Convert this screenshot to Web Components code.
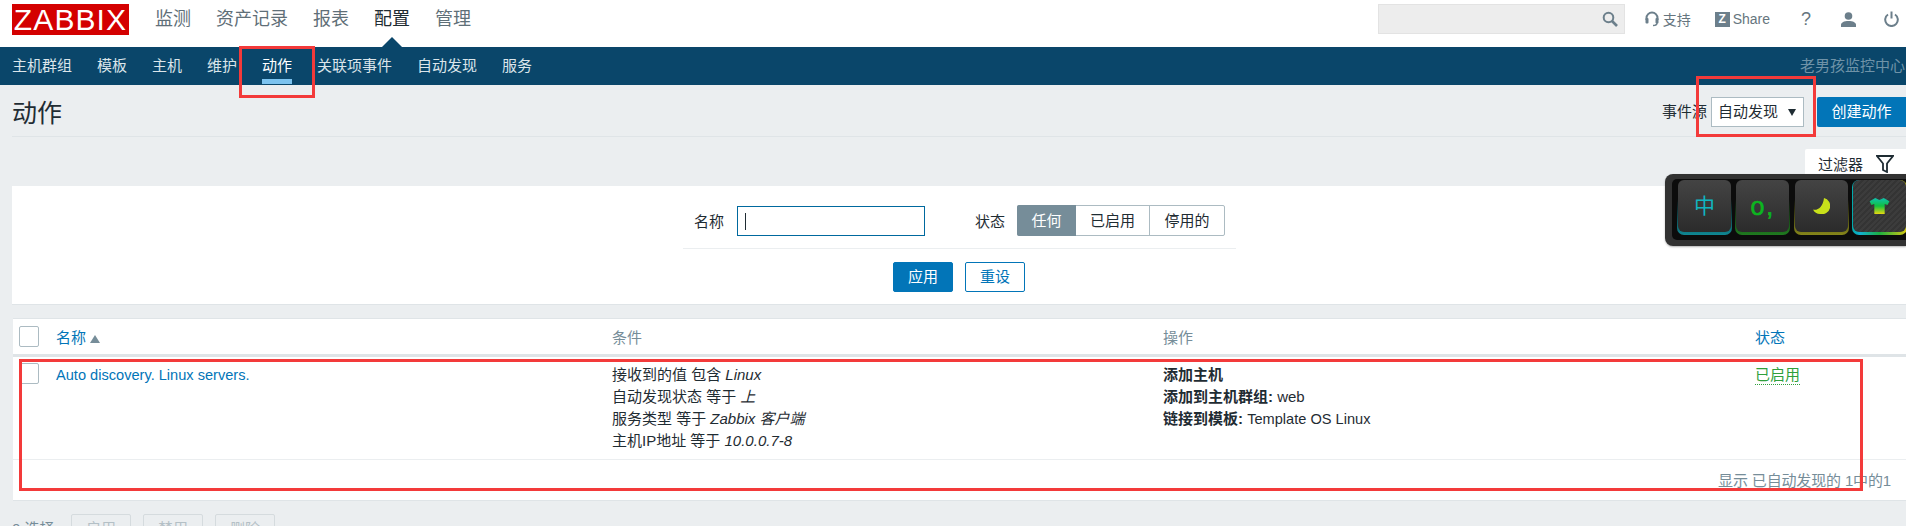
<!DOCTYPE html>
<html lang="zh">
<head>
<meta charset="utf-8">
<title>动作</title>
<style>
    html, body { margin: 0; height: 526px; overflow: hidden; }
    body {
        background: #ebeef0;
        color: #1f2c33;
        font: 15px "Liberation Sans", "Noto Sans CJK SC", sans-serif;
        position: relative;
    }
</style>
</head>
<body>
<z-topbar></z-topbar>
<z-subnav></z-subnav>
<z-page-head></z-page-head>
<z-filter></z-filter>
<z-action-table></z-action-table>
<z-mass-bar></z-mass-bar>
<z-ime-bar></z-ime-bar>
<z-mark style="left:239px;top:46px;width:70px;height:46px"></z-mark>
<z-mark style="left:1696px;top:76px;width:114px;height:55px"></z-mark>
<z-mark style="left:19px;top:359px;width:1838px;height:126px"></z-mark>

<script>
// little helper, every element is just a template string in a shadow root
function shadow(el, html) {
    el.attachShadow({ mode: 'open' });
    el.shadowRoot.innerHTML = html;
}

class ZTopbar extends HTMLElement {
    connectedCallback() {
        shadow(this, `
            <style>
                :host { display: flex; align-items: flex-start; height: 47px; background: #fff; position: relative; }
                .logo {
                    margin: 4px 0 0 12px; width: 117px; height: 31px; background: #d40000; color: #fff;
                    font: 30px/32px "Liberation Sans", sans-serif; letter-spacing: 1.1px; text-align: center;
                }
                nav { display: flex; gap: 25px; margin: 8px 0 0 26px; font-size: 18px; line-height: 22px; color: #5f6f78; }
                nav .on { color: #1f2c33; }
                .arrow {
                    position: absolute; left: 382px; top: 37px; width: 0; height: 0;
                    border: 10px solid transparent; border-top: 0; border-bottom-color: #0a466a;
                }
                .tools { margin-left: auto; display: flex; align-items: center; height: 30px; margin-top: 4px; font-size: 14px; color: #66757e; }
                .search { width: 245px; height: 28px; background: #ededed; border: 1px solid #e3e3e3; display: flex; align-items: center; justify-content: flex-end; margin-right: 20px; }
                .search svg { margin-right: 6px; }
                .tool { display: flex; align-items: center; gap: 3px; }
                .z { width: 15px; height: 15px; background: #6c7f8b; color: #fff; font: bold 12px/15px "Liberation Sans", sans-serif; text-align: center; }
                svg { display: block; }
            </style>
            <div class="logo">ZABBIX</div>
            <nav><span>监测</span><span>资产记录</span><span>报表</span><span class="on">配置</span><span>管理</span></nav>
            <div class="arrow"></div>
            <div class="tools">
                <div class="search">
                    <svg width="16" height="16" viewBox="0 0 16 16" fill="none" stroke="#6c7f8b" stroke-width="2"><circle cx="6.5" cy="6.5" r="4.8"/><path d="M10 10l5 5" stroke-width="2.6"/></svg>
                </div>
                <div class="tool" style="margin-right:24px;gap:4px">
                    <svg width="14" height="16" viewBox="0 0 14 16" fill="none" stroke="#6c7f8b" stroke-width="2"><path d="M1.5 9V7a5.5 5.5 0 0 1 11 0v2"/><rect x="0.5" y="7" width="3" height="5.5" rx="1" fill="#6c7f8b" stroke="none"/><rect x="10.5" y="7" width="3" height="5.5" rx="1" fill="#6c7f8b" stroke="none"/><path d="M12 12c0 2-2 2.5-4 2.5" stroke-width="1.4"/></svg>
                    <span>支持</span>
                </div>
                <div class="tool" style="margin-right:31px"><span class="z">Z</span><span>Share</span></div>
                <div class="tool" style="margin-right:31px;font-size:18px;width:9px">?</div>
                <div class="tool" style="margin-right:28px">
                    <svg width="15" height="15" viewBox="0 0 15 15" fill="#6c7f8b"><circle cx="7.5" cy="4" r="3.8"/><path d="M0 15v-2c0-2.5 3-4 7.5-4s7.5 1.5 7.5 4v2z"/></svg>
                </div>
                <div class="tool" style="margin-right:7px">
                    <svg width="15" height="16" viewBox="0 0 15 16" fill="none" stroke="#6c7f8b" stroke-width="2"><path d="M4 3.5a6.3 6.3 0 1 0 7 0"/><path d="M7.5 0.5v7"/></svg>
                </div>
            </div>
        `);
    }
}

class ZSubnav extends HTMLElement {
    connectedCallback() {
        shadow(this, `
            <style>
                :host { display: flex; height: 38px; background: #0a466a; color: #dbe5ea; font-size: 15px; padding-left: 12px; }
                a { display: block; height: 38px; line-height: 37px; margin-right: 25px; position: relative; white-space: nowrap; }
                a.on { color: #fff; }
                a.on::after { content: ""; position: absolute; left: 0; right: 0; top: 32px; height: 5px; background: #7cc3ef; }
                .brand { margin-left: auto; line-height: 37px; color: #6f93a8; padding-right: 1px; }
            </style>
            <a>主机群组</a><a>模板</a><a>主机</a><a>维护</a><a class="on">动作</a><a>关联项事件</a><a>自动发现</a><a>服务</a>
            <span class="brand">老男孩监控中心</span>
        `);
    }
}

class ZPageHead extends HTMLElement {
    connectedCallback() {
        shadow(this, `
            <style>
                :host { display: flex; align-items: flex-start; height: 51px; margin-left: 12px; border-bottom: 1px solid #dfe4e7; }
                h1 { margin: 13px 0 0; font-size: 25px; line-height: 30px; font-weight: 400; flex: 1; }
                label { margin: 12px 4px 0 0; line-height: 30px; }
                .sel {
                    box-sizing: border-box; width: 93px; height: 30px; margin: 12px 13px 0 0; padding-left: 6px;
                    background: #fff; border: 1px solid #acbbc2; display: flex; align-items: center; line-height: 28px;
                }
                .sel i { margin-left: 10px; width: 0; height: 0; border: 4px solid transparent; border-bottom: 0; border-top: 7px solid #1f2c33; }
                .btn { width: 89px; height: 30px; margin-top: 12px; background: #0275b8; color: #fff; line-height: 30px; text-align: center; border-radius: 2px 0 0 2px; }
            </style>
            <h1>动作</h1>
            <label>事件源</label>
            <div class="sel">自动发现<i></i></div>
            <div class="btn">创建动作</div>
        `);
    }
}

class ZFilter extends HTMLElement {
    connectedCallback() {
        shadow(this, `
            <style>
                :host { display: block; margin-left: 12px; padding-top: 12px; }
                .tab {
                    box-sizing: border-box; margin-left: auto; width: 101px; height: 37px; background: #fff; padding: 0 0 8px 13px;
                    display: flex; align-items: center; gap: 13px; border-radius: 2px 0 0 0;
                }
                .box { background: #fff; height: 118px; border-bottom: 1px solid #dfe4e7; display: flex; flex-direction: column; align-items: center; }
                .form { display: flex; align-items: center; margin-top: 19px; height: 31px; padding-left: 1px; }
                .input { box-sizing: border-box; width: 188px; height: 30px; margin: 0 50px 0 13px; border: 1px solid #00699e; padding: 6px 7px; background: #fff; }
                .input i { display: block; width: 1px; height: 17px; background: #1f2c33; }
                .seg { display: flex; margin-left: 12px; height: 31px; line-height: 29px; box-sizing: border-box; border: 1px solid #acbbc2; border-radius: 2px; text-align: center; }
                .seg span { box-sizing: border-box; }
                .seg .any { width: 59px; margin: -1px 0 -1px -1px; line-height: 31px; background: #768d99; color: #fff; border-radius: 2px 0 0 2px; }
                .seg .en { width: 74px; border-right: 1px solid #acbbc2; }
                .seg .dis { width: 74px; }
                hr { width: 553px; height: 1px; margin: 12px 0 13px; border: 0; background: #ebeef0; }
                .btns { display: flex; gap: 12px; }
                .btns div { box-sizing: border-box; width: 60px; height: 30px; line-height: 28px; border: 1px solid #0275b8; border-radius: 2px; text-align: center; color: #0275b8; }
                .btns .main { background: #0275b8; color: #fff; }
            </style>
            <div class="tab">过滤器
                <svg width="18" height="18" viewBox="0 0 18 18" fill="none" stroke="#1f2c33" stroke-width="1.8"><path d="M1 1h16l-6 7.5v8.5l-4-2v-6.5z"/></svg>
            </div>
            <div class="box">
                <div class="form">
                    <span>名称</span>
                    <div class="input"><i></i></div>
                    <span>状态</span>
                    <div class="seg"><span class="any">任何</span><span class="en">已启用</span><span class="dis">停用的</span></div>
                </div>
                <hr>
                <div class="btns"><div class="main">应用</div><div>重设</div></div>
            </div>
        `);
    }
}

class ZCheck extends HTMLElement {
    connectedCallback() {
        shadow(this, `<style>
            :host { display: block; box-sizing: border-box; width: 20px; height: 21px; background: #fff; border: 1px solid #acbbc2; border-radius: 2px; }
        </style>`);
    }
}

class ZActionTable extends HTMLElement {
    connectedCallback() {
        shadow(this, `
            <style>
                :host { display: block; margin: 13px 0 0 13px; background: #fff; height: 181px; border-top: 1px solid #dfe4e7; border-bottom: 1px solid #dfe4e7; }
                .row { display: grid; grid-template-columns: 43px 556px 551px 592px 1fr; }
                .head { height: 35px; border-bottom: 3px solid #dfe4e7; align-items: center; color: #768d99; }
                .body { height: 95px; padding-top: 7px; line-height: 22px; border-bottom: 1px solid #ebeef0; }
                z-check { margin-left: 6px; }
                .body z-check { margin-top: -1px; }
                .link { color: #0275b8; }
                .lat { font-size: 14.6px; }
                .arrow { display: inline-block; margin-left: 4px; width: 0; height: 0; border: 5px solid transparent; border-top: 0; border-bottom: 8px solid #768d99; }
                em { font-style: italic; }
                b { font-weight: 700; }
                .green { color: #2f9f3c; border-bottom: 1px dotted #2f9f3c; line-height: 19px; display: inline-block; }
                .foot { text-align: right; color: #768d99; padding: 11px 15px 0 0; line-height: 20px; letter-spacing: -0.15px; }
            </style>
            <div class="row head">
                <z-check></z-check>
                <div><span class="link">名称</span><span class="arrow"></span></div>
                <div>条件</div>
                <div>操作</div>
                <div class="link">状态</div>
            </div>
            <div class="row body">
                <z-check></z-check>
                <div class="link lat">Auto discovery. Linux servers.</div>
                <div>接收到的值 包含 <em>Linux</em><br>自动发现状态 等于 <em>上</em><br>服务类型 等于 <em>Zabbix 客户端</em><br>主机IP地址 等于 <em>10.0.0.7-8</em></div>
                <div><b>添加主机</b><br><b>添加到主机群组:</b> web<br><b>链接到模板:</b> <span class="lat">Template OS Linux</span></div>
                <div><span class="green">已启用</span></div>
            </div>
            <div class="foot">显示 已自动发现的 1中的1</div>
        `);
    }
}

class ZMassBar extends HTMLElement {
    connectedCallback() {
        shadow(this, `
            <style>
                :host { display: flex; align-items: flex-start; margin: 13px 0 0 12px; color: #768d99; gap: 12px; }
                span { line-height: 30px; width: 47px; }
                div { box-sizing: border-box; width: 60px; height: 30px; line-height: 28px; text-align: center; background: #ebeef0; border: 1px solid #d5dbde; border-radius: 2px; color: #b4c0c6; }
            </style>
            <span>0 选择</span><div>启用</div><div>禁用</div><div>删除</div>
        `);
    }
}

class ZImeKey extends HTMLElement {
    connectedCallback() {
        shadow(this, `
            <style>
                :host {
                    display: block; flex: none; position: relative; width: 55px; height: 55px; border-radius: 7px;
                    background: var(--edge);
                }
                .face {
                    position: absolute; inset: 0 1px 3px 1px; border-radius: 6px; display: flex; align-items: center; justify-content: center;
                    background: var(--face, linear-gradient(#444, #2b2b2b));
                }
            </style>
            <div class="face"><slot></slot></div>
        `);
    }
}

class ZImeBar extends HTMLElement {
    connectedCallback() {
        shadow(this, `
            <style>
                :host {
                    position: absolute; left: 1665px; top: 174px; width: 241px; height: 72px; box-sizing: border-box;
                    padding: 5px 0 6px 7px; background: #323232; border-radius: 8px 0 0 8px;
                    box-shadow: 0 1px 2px rgba(0,0,0,.3); overflow: hidden;
                }
                .well { display: flex; gap: 3.4px; height: 61px; box-sizing: border-box; padding: 1px 0 0 5px; background: #0c0c0c; border-radius: 5px 0 0 5px; }
                .zh { color: #10b5c0; font-size: 21px; line-height: 24px; }
                .pn { color: #0cb520; font: 25px/22px "Liberation Sans", sans-serif; letter-spacing: 2px; -webkit-text-stroke: 0.6px #0cb520; }
                svg { display: block; }
            </style>
            <div class="well">
                <z-ime-key style="--edge:linear-gradient(transparent 35%,#0f8793)"><span class="zh">中</span></z-ime-key>
                <z-ime-key style="--edge:linear-gradient(transparent 35%,#1f7a1f)"><span class="pn">o,</span></z-ime-key>
                <z-ime-key style="--edge:linear-gradient(transparent 35%,#86861a)">
                    <svg width="17" height="16" viewBox="0 0 17 16"><path d="M11 0a8 8 0 0 1-4 16A8 8 0 0 1 0 11.5c4 1.5 10-2 11-11.5z" fill="#c8e01a"/></svg>
                </z-ime-key>
                <z-ime-key style="--edge:linear-gradient(90deg,#0aa 0,#12b0d0 15%,#1cb040 50%,#d8c810 100%);--face:repeating-linear-gradient(135deg,#3c3c3c 0 2px,#343434 2px 4px)">
                    <svg width="21" height="16" viewBox="0 0 21 17"><defs><linearGradient id="s" x1="0" y1="0" x2="0" y2="1"><stop offset="0" stop-color="#10c0b0"/><stop offset=".5" stop-color="#10c040"/><stop offset="1" stop-color="#e8d810"/></linearGradient></defs><path d="M6 0l4.5 2L15 0l6 3.5-2 4-3-1V17H5V6.5l-3 1-2-4z" fill="url(#s)"/></svg>
                </z-ime-key>
            </div>
        `);
    }
}

class ZMark extends HTMLElement {
    connectedCallback() {
        shadow(this, `<style>
            :host { position: absolute; display: block; border: 3px solid #f33a3a; pointer-events: none; }
        </style>`);
    }
}

customElements.define('z-topbar', ZTopbar);
customElements.define('z-subnav', ZSubnav);
customElements.define('z-page-head', ZPageHead);
customElements.define('z-filter', ZFilter);
customElements.define('z-check', ZCheck);
customElements.define('z-action-table', ZActionTable);
customElements.define('z-mass-bar', ZMassBar);
customElements.define('z-ime-key', ZImeKey);
customElements.define('z-ime-bar', ZImeBar);
customElements.define('z-mark', ZMark);
</script>
</body>
</html>
